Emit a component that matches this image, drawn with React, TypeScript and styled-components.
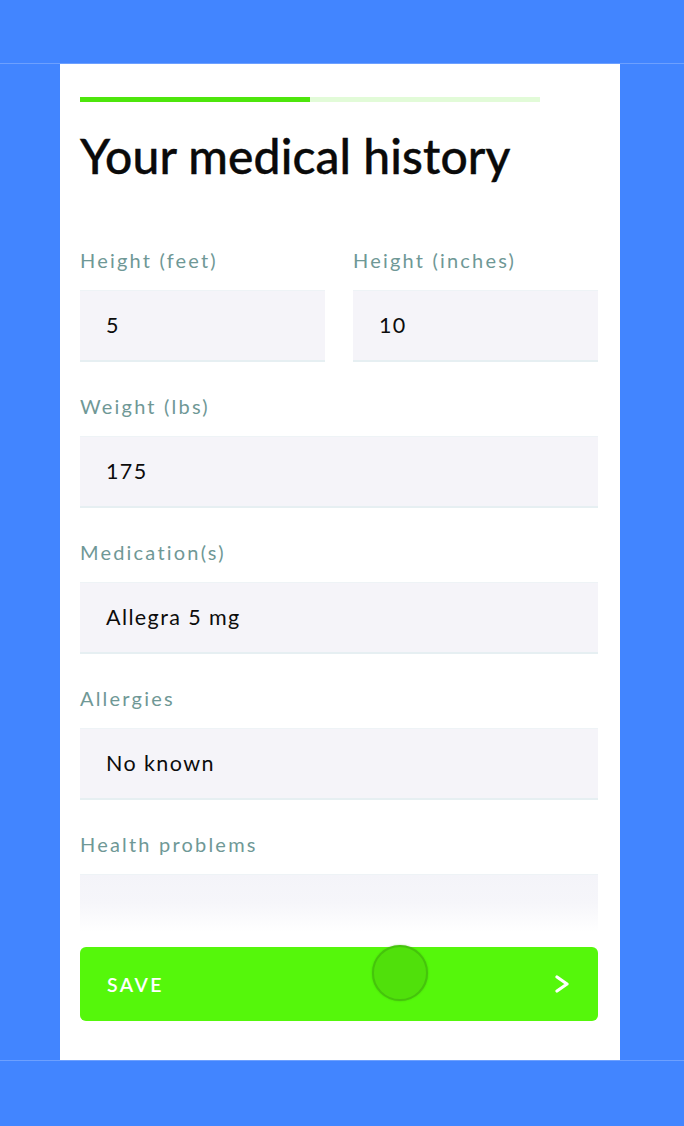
import React from "react";
import styled, { createGlobalStyle } from "styled-components";

const Global = createGlobalStyle`
  html, body { margin: 0; padding: 0; background: #4285ff; }
  body { font-family: "Lato", "Noto Sans", sans-serif; }
`;

const Page = styled.div`
  width: 684px;
  min-height: 1126px;
  background: #4285ff;
  padding-top: 63px;
  box-sizing: border-box;
`;

const Band = styled.div`
  border-top: 1px solid #6da0ff;
  border-bottom: 1px solid #6da0ff;
`;

const Card = styled.main`
  width: 560px;
  margin-left: 60px;
  background: #ffffff;
  box-sizing: border-box;
  padding: 33px 22px 39px 20px;
  display: flex;
  flex-direction: column;
`;

const Progress = styled.div`
  width: 460px;
  height: 5px;
  background: #e2fbd8;
  display: flex;
`;

const ProgressFill = styled.div`
  height: 100%;
  background: #4ee60c;
`;

const Title = styled.h1`
  margin: 26px 0 0;
  font-family: "Lato", sans-serif;
  font-weight: 500;
  font-size: 48px;
  line-height: 56px;
  letter-spacing: 0.1px;
  color: #0a0a0a;
  -webkit-text-stroke: 0.4px #0a0a0a;
`;

const Fields = styled.div`
  margin-top: 64px;
  display: flex;
  flex-direction: column;
  gap: 32px;
`;

const Row = styled.div`
  display: grid;
  grid-template-columns: 245px 245px;
  column-gap: 28px;
`;

const Field = styled.label`
  display: flex;
  flex-direction: column;
`;

const Label = styled.span`
  font-family: "Lato", sans-serif;
  font-size: 20px;
  line-height: 24px;
  letter-spacing: 2.2px;
  color: #6f9896;
  margin-bottom: 18px;
`;

const Input = styled.div<{ $fade?: boolean }>`
  height: 72px;
  box-sizing: border-box;
  background: ${(p) =>
    p.$fade
      ? "linear-gradient(#f4f4f9 0%, #f6f6fa 40%, #ffffff 80%)"
      : "#f5f4f9"};
  border-top: 1px solid #eef3f6;
  border-bottom: ${(p) => (p.$fade ? "none" : "2px solid #e6eff2")};
  padding: 0 0 2px 26px;
  display: flex;
  align-items: center;
  font-family: "Lato", sans-serif;
  font-size: 21.5px;
  letter-spacing: 1.4px;
  color: #0c0c0c;
`;

const Button = styled.button`
  position: relative;
  margin-top: 1px;
  height: 74px;
  width: 518px;
  border: none;
  border-radius: 6px;
  background: #55f70b;
  display: flex;
  align-items: center;
  justify-content: space-between;
  padding: 0 28px 0 27px;
  box-sizing: border-box;
  color: #ffffff;
  font-family: "Lato", sans-serif;
  font-weight: 600;
  font-size: 19.5px;
  letter-spacing: 2.4px;
  cursor: pointer;
`;

const Touch = styled.span`
  position: absolute;
  left: 292px;
  top: -2px;
  width: 56px;
  height: 56px;
  border-radius: 50%;
  background: #50e00b;
  border: 2px solid #45c40c;
  box-sizing: border-box;
  box-shadow: 0 0 2px rgba(40, 140, 0, 0.4);
`;

export default function App() {
  return (
    <Page>
      <Global />
      <Band>
        <Card>
          <Progress>
            <ProgressFill style={{ width: "50%" }} />
          </Progress>
          <Title>Your medical history</Title>
          <Fields>
            <Row>
              <Field>
                <Label>Height (feet)</Label>
                <Input>5</Input>
              </Field>
              <Field>
                <Label>Height (inches)</Label>
                <Input>10</Input>
              </Field>
            </Row>
            <Field>
              <Label>Weight (lbs)</Label>
              <Input>175</Input>
            </Field>
            <Field>
              <Label>Medication(s)</Label>
              <Input>Allegra 5 mg</Input>
            </Field>
            <Field>
              <Label>Allergies</Label>
              <Input>No known</Input>
            </Field>
            <Field>
              <Label>Health problems</Label>
              <Input $fade />
            </Field>
          </Fields>
          <Button>
            <span>SAVE</span>
            <svg width="16" height="18" viewBox="0 0 16 18" fill="none">
              <path d="M3 2 L13 9 L3 16" stroke="#fff" strokeWidth="3.2" strokeLinecap="round" strokeLinejoin="round" />
            </svg>
            <Touch />
          </Button>
        </Card>
      </Band>
    </Page>
  );
}
